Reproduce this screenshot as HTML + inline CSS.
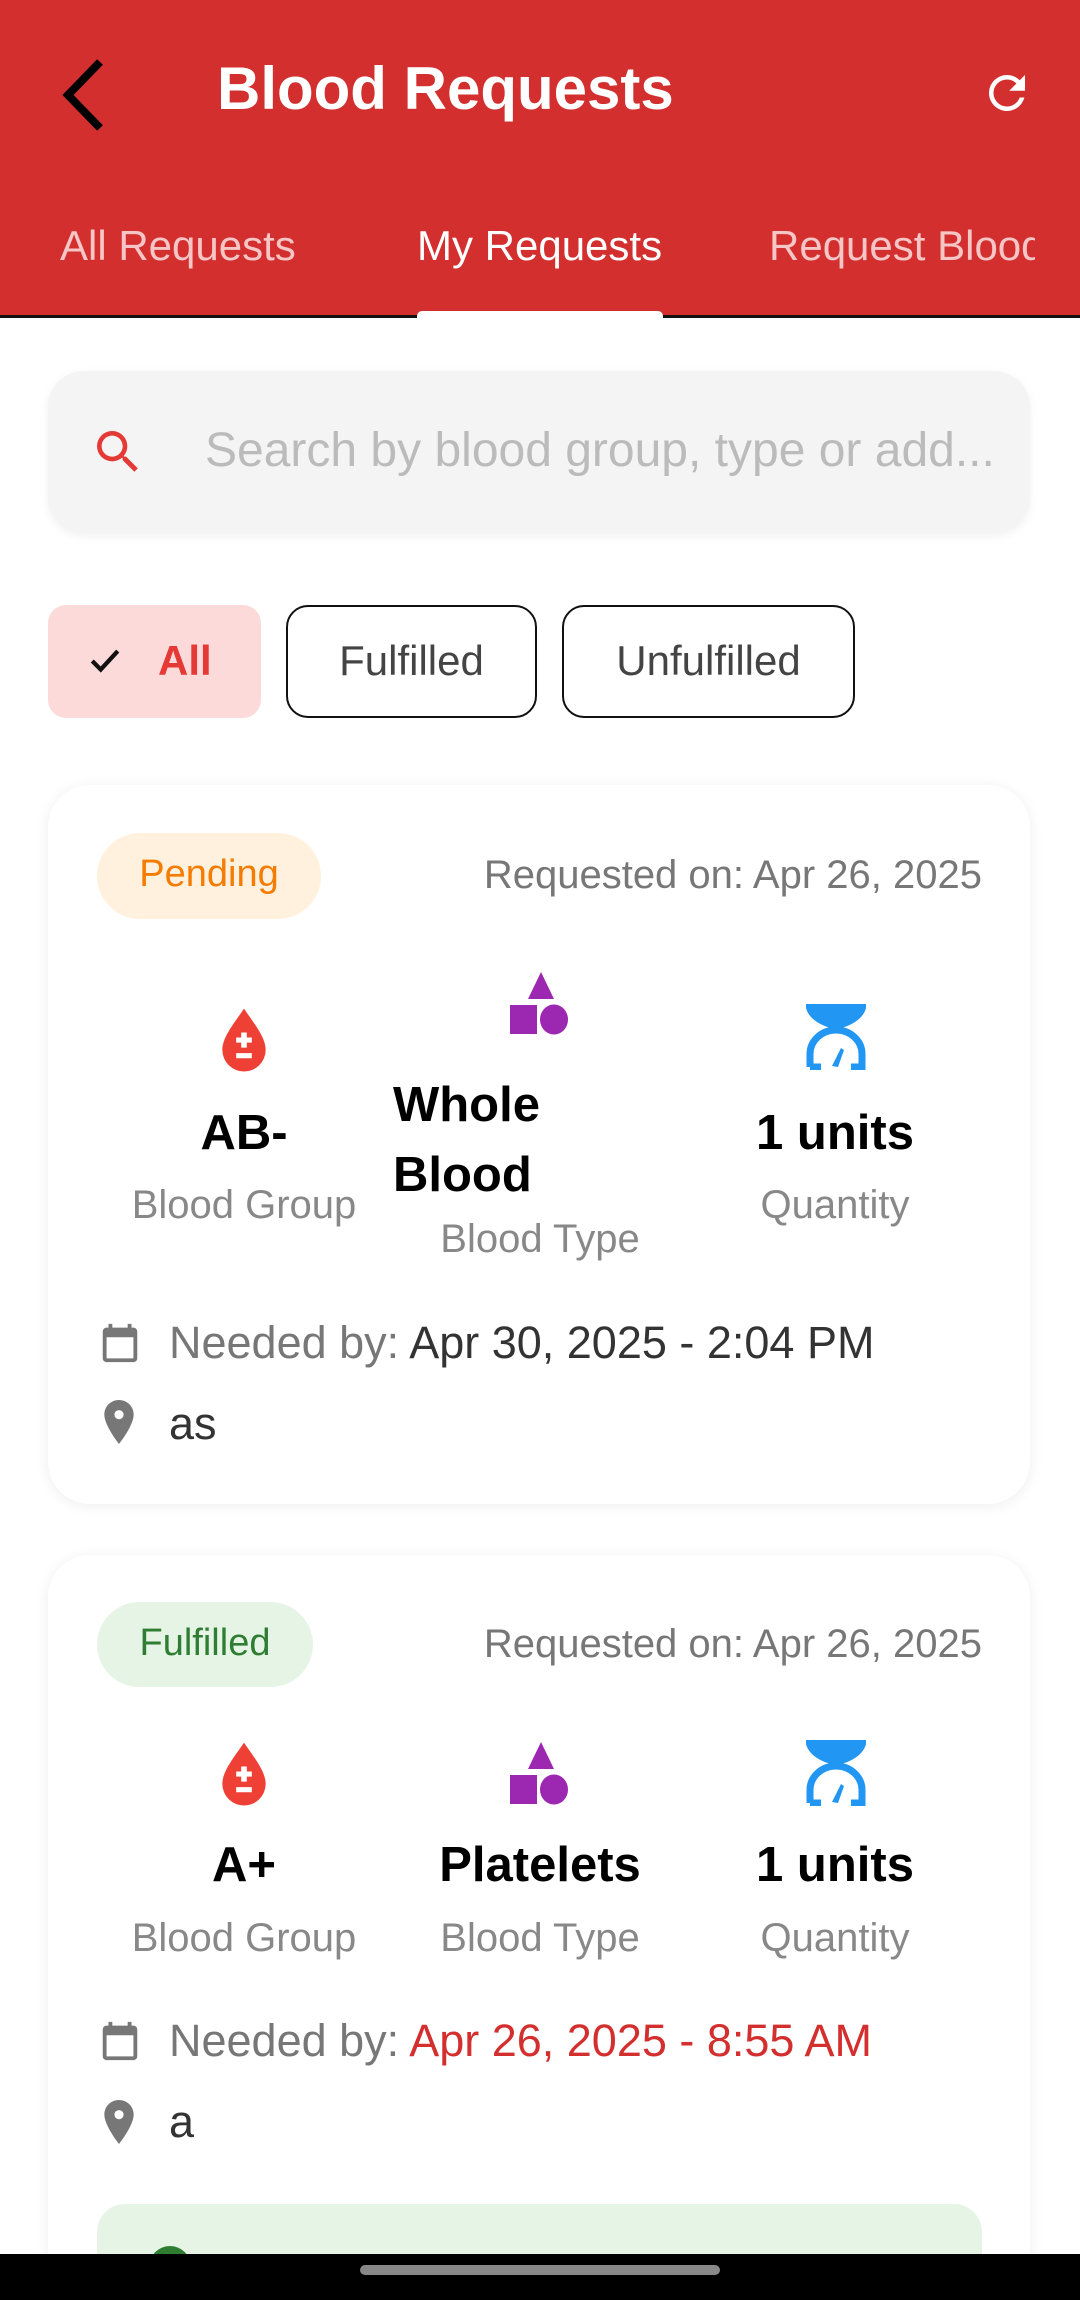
<!DOCTYPE html>
<html style="overflow:hidden;height:2300px"><head><meta charset="utf-8"><style>
*{margin:0;padding:0;box-sizing:border-box}
body{width:1080px;height:2300px;background:#fff;position:relative;overflow:hidden;font-family:"Liberation Sans",sans-serif}
.a{position:absolute}
.hdr{left:0;top:0;width:1080px;height:318px;background:#d32f2f;border-bottom:3px solid #111}
.t{white-space:nowrap}
.card{left:48px;width:982px;background:#fff;border-radius:42px;box-shadow:0 2px 14px rgba(0,0,0,0.07)}
.val{font-weight:bold;font-size:49px;color:#000;text-align:center;width:300px}
.lab{font-size:40px;color:#888;text-align:center;width:300px}
.nd{font-size:45px;color:#777}
.nd b{font-weight:normal;color:#333}
</style></head><body>
<div class="a hdr"></div>
<svg class="a" style="left:58px;top:58px" width="50" height="74" viewBox="0 0 50 74"><path d="M42 4 L10 37 L42 70" fill="none" stroke="#000" stroke-width="8"/></svg>
<div class="a t" style="left:217px;top:54px;font-size:60px;font-weight:bold;color:#fff">Blood Requests</div>
<svg class="a" style="left:980px;top:66px" width="54" height="54" viewBox="0 0 24 24"><path fill="#fff" d="M17.65 6.35A7.95 7.95 0 0 0 12 4a8 8 0 1 0 7.73 10h-2.08A6 6 0 1 1 12 6c1.66 0 3.14.69 4.22 1.78L13 11h7V4z"/></svg>
<div class="a t" style="left:60px;top:222px;font-size:42px;color:#f6c6c6">All Requests</div>
<div class="a t" style="left:417px;top:222px;font-size:42px;color:#fff">My Requests</div>
<div class="a t" style="left:769px;top:222px;font-size:42px;color:#f6c6c6;width:266px;overflow:hidden">Request Blood</div>
<div class="a" style="left:417px;top:311px;width:246px;height:9px;background:#fff;border-radius:5px 5px 0 0"></div>

<div class="a" style="left:48px;top:371px;width:982px;height:162px;background:#f4f4f4;border-radius:36px;box-shadow:0 3px 10px rgba(0,0,0,0.06)"></div>
<svg class="a" style="left:90px;top:424px" width="56" height="56" viewBox="0 0 24 24"><path fill="#e53935" d="M15.5 14h-.79l-.28-.27A6.47 6.47 0 0 0 16 9.5 6.5 6.5 0 1 0 9.5 16c1.61 0 3.09-.59 4.23-1.57l.27.28v.79l5 4.99L20.49 19l-4.99-5zm-6 0C7.01 14 5 11.99 5 9.5S7.01 5 9.5 5 14 7.01 14 9.5 11.99 14 9.5 14z"/></svg>
<div class="a t" style="left:205px;top:423px;width:822px;overflow:hidden;font-size:48px;color:#bbb">Search by blood group, type or add...</div>

<div class="a" style="left:48px;top:605px;width:213px;height:113px;background:#fddada;border-radius:18px"></div>
<svg class="a" style="left:86px;top:644px" width="38" height="34" viewBox="0 0 24 24"><path d="M3 12l6 6L21 5" fill="none" stroke="#111" stroke-width="3"/></svg>
<div class="a t" style="left:158px;top:637px;font-size:42px;font-weight:bold;color:#e53935">All</div>
<div class="a" style="left:286px;top:605px;width:251px;height:113px;border:2.5px solid #111;border-radius:22px"></div>
<div class="a t" style="left:286px;top:637px;width:251px;text-align:center;font-size:42px;color:#444">Fulfilled</div>
<div class="a" style="left:562px;top:605px;width:293px;height:113px;border:2.5px solid #111;border-radius:22px"></div>
<div class="a t" style="left:562px;top:637px;width:293px;text-align:center;font-size:42px;color:#444">Unfulfilled</div>

<!-- card 1 -->
<div class="a card" style="top:785px;height:719px"></div>
<div class="a" style="left:97px;top:833px;width:224px;height:86px;background:#fff1de;border-radius:43px"></div>
<div class="a t" style="left:97px;top:853px;width:224px;text-align:center;font-size:38px;color:#f57c00">Pending</div>
<div class="a t" style="left:432px;top:853px;width:550px;text-align:right;font-size:40px;color:#777">Requested on: Apr 26, 2025</div>

<svg class="a" style="left:218px;top:1006px" width="52" height="66" viewBox="0 0 24 30"><path fill="#ef4035" d="M12 1C8 7 2 14 2 20a10 10 0 0 0 20 0C22 14 16 7 12 1z"/><path fill="#fff" d="M10.7 12h2.6v2.3h2.3v2.4h-2.3V19h-2.6v-2.3H8.4v-2.4h2.3zM8.4 21.5h7.2v2.4H8.4z"/></svg>
<svg class="a" style="left:510px;top:972px" width="62" height="64" viewBox="0 0 62 64"><path fill="#9c27b0" d="M31 0L44 27H18z"/><rect x="0" y="33" width="27" height="29" fill="#9c27b0"/><ellipse cx="44" cy="47.5" rx="14" ry="15" fill="#9c27b0"/></svg>
<svg class="a" style="left:805px;top:1004px" width="62" height="66" viewBox="0 0 62 66"><path fill="#2196f3" d="M1 0h60v4C58 16 44 22 36 24h-10C18 22 4 16 1 4z"/><path fill="none" stroke="#2196f3" stroke-width="7" d="M5 63V50A26 24 0 0 1 57 50V63H46M16 63H5"/><path fill="#2196f3" d="M27 62L36 44l3 2-6 17z"/></svg>

<div class="a val t" style="left:94px;top:1105px">AB-</div>
<div class="a lab t" style="left:94px;top:1183px">Blood Group</div>
<div class="a t" style="left:393px;top:1070px;font-size:49px;font-weight:bold;line-height:70px;color:#000">Whole<br>Blood</div>
<div class="a lab t" style="left:390px;top:1217px">Blood Type</div>
<div class="a val t" style="left:685px;top:1105px">1 units</div>
<div class="a lab t" style="left:685px;top:1183px">Quantity</div>

<svg class="a" style="left:97px;top:1320px" width="46" height="46" viewBox="0 0 24 24"><path fill="#777" d="M19 4h-1V2h-2v2H8V2H6v2H5a2 2 0 0 0-2 2v14a2 2 0 0 0 2 2h14a2 2 0 0 0 2-2V6a2 2 0 0 0-2-2zm0 16H5V9h14z"/></svg>
<div class="a t nd" style="left:169px;top:1317px">Needed by: <b>Apr 30, 2025 - 2:04 PM</b></div>
<svg class="a" style="left:101px;top:1400px" width="36" height="44" viewBox="0 0 18 24"><path fill="#777" d="M9 0C4.6 0 1 3.5 1 8c0 6 8 16 8 16s8-10 8-16c0-4.5-3.6-8-8-8zm0 10.5A2.5 2.5 0 1 1 9 5.5a2.5 2.5 0 0 1 0 5z"/></svg>
<div class="a t" style="left:169px;top:1398px;font-size:45px;color:#333">as</div>

<!-- card 2 -->
<div class="a card" style="top:1555px;height:745px;border-bottom-left-radius:0;border-bottom-right-radius:0"></div>
<div class="a" style="left:97px;top:1602px;width:216px;height:85px;background:#e6f4e6;border-radius:43px"></div>
<div class="a t" style="left:97px;top:1622px;width:216px;text-align:center;font-size:38px;color:#2e7d32">Fulfilled</div>
<div class="a t" style="left:432px;top:1622px;width:550px;text-align:right;font-size:40px;color:#777">Requested on: Apr 26, 2025</div>

<svg class="a" style="left:218px;top:1740px" width="52" height="66" viewBox="0 0 24 30"><path fill="#ef4035" d="M12 1C8 7 2 14 2 20a10 10 0 0 0 20 0C22 14 16 7 12 1z"/><path fill="#fff" d="M10.7 12h2.6v2.3h2.3v2.4h-2.3V19h-2.6v-2.3H8.4v-2.4h2.3zM8.4 21.5h7.2v2.4H8.4z"/></svg>
<svg class="a" style="left:510px;top:1742px" width="62" height="64" viewBox="0 0 62 64"><path fill="#9c27b0" d="M31 0L44 27H18z"/><rect x="0" y="33" width="27" height="29" fill="#9c27b0"/><ellipse cx="44" cy="47.5" rx="14" ry="15" fill="#9c27b0"/></svg>
<svg class="a" style="left:805px;top:1740px" width="62" height="66" viewBox="0 0 62 66"><path fill="#2196f3" d="M1 0h60v4C58 16 44 22 36 24h-10C18 22 4 16 1 4z"/><path fill="none" stroke="#2196f3" stroke-width="7" d="M5 63V50A26 24 0 0 1 57 50V63H46M16 63H5"/><path fill="#2196f3" d="M27 62L36 44l3 2-6 17z"/></svg>

<div class="a val t" style="left:94px;top:1837px">A+</div>
<div class="a lab t" style="left:94px;top:1916px">Blood Group</div>
<div class="a val t" style="left:390px;top:1837px">Platelets</div>
<div class="a lab t" style="left:390px;top:1916px">Blood Type</div>
<div class="a val t" style="left:685px;top:1837px">1 units</div>
<div class="a lab t" style="left:685px;top:1916px">Quantity</div>

<svg class="a" style="left:97px;top:2018px" width="46" height="46" viewBox="0 0 24 24"><path fill="#777" d="M19 4h-1V2h-2v2H8V2H6v2H5a2 2 0 0 0-2 2v14a2 2 0 0 0 2 2h14a2 2 0 0 0 2-2V6a2 2 0 0 0-2-2zm0 16H5V9h14z"/></svg>
<div class="a t nd" style="left:169px;top:2015px">Needed by: <b style="color:#d32f2f">Apr 26, 2025 - 8:55 AM</b></div>
<svg class="a" style="left:101px;top:2100px" width="36" height="44" viewBox="0 0 18 24"><path fill="#777" d="M9 0C4.6 0 1 3.5 1 8c0 6 8 16 8 16s8-10 8-16c0-4.5-3.6-8-8-8zm0 10.5A2.5 2.5 0 1 1 9 5.5a2.5 2.5 0 0 1 0 5z"/></svg>
<div class="a t" style="left:169px;top:2096px;font-size:45px;color:#333">a</div>

<div class="a" style="left:97px;top:2204px;width:885px;height:96px;background:#e6f4e6;border-radius:28px 28px 0 0"></div>
<div class="a" style="left:149px;top:2246px;width:42px;height:42px;background:#2e7d32;border-radius:50%"></div>

<div class="a" style="left:0;top:2254px;width:1080px;height:46px;background:#000"></div>
<div class="a" style="left:360px;top:2265px;width:360px;height:10px;background:#888;border-radius:5px"></div>
</body></html>
